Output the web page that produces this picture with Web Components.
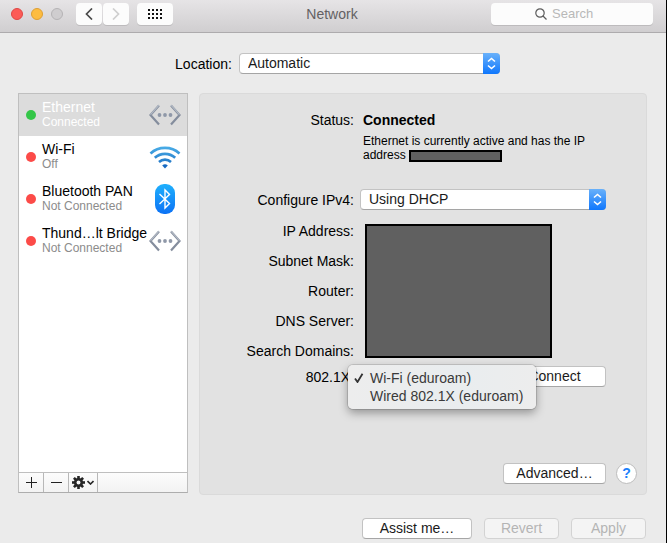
<!DOCTYPE html>
<html lang="en">
<head>
<meta charset="utf-8">
<title>Network</title>
<style>
  body {
    margin: 0;
    background: #ebebeb;
    color: #000;
    font: 14px/20px "Liberation Sans", Arial, sans-serif;
  }
</style>
</head>
<body>

<mac-window>
  <mac-toolbar slot="toolbar" heading="Network"></mac-toolbar>

  <mac-select class="location" label="Location:" options="Automatic"></mac-select>

  <service-list slot="sidebar">
    <service-item name="Ethernet" status="Connected" icon="ethernet" online selected></service-item>
    <service-item name="Wi-Fi" status="Off" icon="wifi"></service-item>
    <service-item name="Bluetooth PAN" status="Not Connected" icon="bluetooth"></service-item>
    <service-item name="Thund…lt Bridge" status="Not Connected" icon="ethernet"></service-item>
  </service-list>

  <network-panel slot="panel"></network-panel>

  <mac-button slot="actions" size="110">Assist me…</mac-button>
  <mac-button slot="actions" size="75" disabled>Revert</mac-button>
  <mac-button slot="actions" size="75" disabled>Apply</mac-button>
</mac-window>

<script>
const ICONS = {
  ethernet: `
    <svg width="32" height="22" viewBox="0 0 32 22" fill="none">
      <path d="M10 1.500 1.500 11l8.500 9.500M22 1.500l8.500 9.500-8.500 9.500" stroke="#848d9d" stroke-width="2.200"/>
      <path d="M10 1.200 1.500 10.700M22 1.200l8.500 9.500" stroke="#b3bac5" stroke-width="1.200"/>
      <g fill="#8f98a8"><circle cx="10.500" cy="11" r="1.900"/><circle cx="16" cy="11" r="1.900"/><circle cx="21.500" cy="11" r="1.900"/></g>
    </svg>`,
  wifi: `
    <svg width="32" height="24" viewBox="0 0 32 24" fill="none">
      <defs><linearGradient id="w" x1="0" y1="0" x2="0" y2="24" gradientUnits="userSpaceOnUse">
        <stop offset="0" stop-color="#4db2ea"/><stop offset="1" stop-color="#1566bd"/></linearGradient></defs>
      <g stroke="url(#w)" stroke-width="2.600">
        <path d="M1.500 8.500C9.500 1 22.500 1 30.500 8.500"/>
        <path d="M5.800 12.800C11.500 7.500 20.500 7.500 26.200 12.800"/>
        <path d="M10 17C13.500 13.800 18.500 13.800 22 17"/>
      </g>
      <path d="M13.200 20.500Q16 18 18.800 20.500L16 23.500Z" fill="#1669c2"/>
    </svg>`,
  bluetooth: `
    <svg width="32" height="32" viewBox="0 0 32 32" fill="none">
      <defs><linearGradient id="b" x1="0" y1="0" x2="0" y2="1">
        <stop offset="0" stop-color="#1fb0fd"/><stop offset="1" stop-color="#0c72f5"/></linearGradient></defs>
      <rect x="6" y="1" width="20" height="30" rx="9" fill="url(#b)"/>
      <path d="M10.500 11l10 9.500L16 25V7l4.500 4.500-10 9.500" stroke="#fff" stroke-width="1.400"/>
    </svg>`,
};

// attach an open shadow root and fill it
function render(el, html) {
  el.attachShadow({ mode: 'open' }).innerHTML = html;
}

class MacWindow extends HTMLElement {
  constructor() {
    super();
    render(this, `
      <style>
        :host {
          display: flex;
          flex-direction: column;
          box-sizing: border-box;
          min-height: 100vh;
          padding-bottom: 4px;
          border-right: 1px solid #000;
        }
        .location {
          display: flex;
          justify-content: center;
          padding: 20px 0 19px 9px;
        }
        ::slotted(.location) { --control-width: 261px; }
        main {
          flex: 1;
          display: grid;
          grid-template-columns: 170px 1fr;
          gap: 11px;
          padding: 0 19px 0 18px;
        }
        ::slotted(service-list) { margin-bottom: 2px; }
        footer {
          display: flex;
          justify-content: flex-end;
          gap: 12px;
          padding: 23px 20px 0;
        }
      </style>
      <slot name="toolbar"></slot>
      <div class="location"><slot></slot></div>
      <main>
        <slot name="sidebar"></slot>
        <slot name="panel"></slot>
      </main>
      <footer><slot name="actions"></slot></footer>
    `);
  }
}

class MacToolbar extends HTMLElement {
  constructor() {
    super();
    // 4 x 3 dots of the "show all" button
    let dots = '';
    for (let y = 0; y < 3; y++) {
      for (let x = 0; x < 4; x++) {
        dots += `<rect x="${x * 4}" y="${y * 4}" width="2" height="2"/>`;
      }
    }
    render(this, `
      <style>
        :host {
          display: grid;
          grid-template-columns: 1fr auto 1fr;
          align-items: center;
          height: 32px;
          padding: 0 13px 0 11px;
          background: linear-gradient(#e6e4e6, #d0ced0);
          border-bottom: 1px solid #adabad;
        }
        .left, .lights, .nav { display: flex; align-items: center; }
        .lights { gap: 8px; margin-right: 13px; }
        .nav { gap: 1px; margin-right: 8px; }
        .left, .search { margin-bottom: 4px; }
        button {
          display: grid;
          place-items: center;
          width: 26px;
          height: 22px;
          padding: 0;
          border: 0;
          border-radius: 4px;
          background: #fcfcfc;
          box-shadow: 0 1px 0 #bdbbbd;
        }
        .lights button {
          width: 12px;
          height: 12px;
          border-radius: 50%;
          box-shadow: none;
        }
        .lights .close { background: #fc5b57; border: 1px solid #df4744; }
        .lights .minimize { background: #fdbc40; border: 1px solid #de9f34; }
        .lights .zoom { background: #cfcdcf; border: 1px solid #b5b3b5; }
        .all { width: 36px; }
        h1 {
          margin: 0 0 4px;
          font-size: 14px;
          font-weight: normal;
          color: #636163;
        }
        .search {
          justify-self: end;
          display: flex;
          align-items: center;
          gap: 5px;
          box-sizing: border-box;
          width: 162px;
          height: 22px;
          padding-left: 44px;
          border-radius: 4px;
          background: #fcfcfc;
          box-shadow: 0 1px 0 #bdbbbd;
        }
        input {
          flex: 1;
          min-width: 0;
          padding: 0;
          border: 0;
          outline: 0;
          background: none;
          font: inherit;
          font-size: 13px;
        }
        input::placeholder { color: #b8b8b8; }
      </style>
      <div class="left">
        <div class="lights">
          <button class="close" aria-label="Close"></button>
          <button class="minimize" aria-label="Minimize"></button>
          <button class="zoom" aria-label="Zoom" disabled></button>
        </div>
        <div class="nav">
          <button aria-label="Back"><svg width="8" height="12" fill="none" stroke="#4a4a4a" stroke-width="1.700"><path d="M7 .5 1.500 6 7 11.500"/></svg></button>
          <button aria-label="Forward" disabled><svg width="8" height="12" fill="none" stroke="#cfcfcf" stroke-width="1.700"><path d="M1 .5 6.500 6 1 11.500"/></svg></button>
        </div>
        <button class="all" aria-label="Show All"><svg width="14" height="10" fill="#111">${dots}</svg></button>
      </div>
      <h1>${this.getAttribute('heading')}</h1>
      <label class="search">
        <svg width="12" height="12" fill="none" stroke="#5c5c5c" stroke-width="1.200"><circle cx="5" cy="5" r="4.200"/><path d="M8 8l3.500 3.500"/></svg>
        <input type="text" placeholder="Search" aria-label="Search">
      </label>
    `);
  }
}

class MacSelect extends HTMLElement {
  constructor() {
    super();
    const options = this.getAttribute('options').split('|');
    render(this, `
      <style>
        :host {
          display: grid;
          grid-template-columns: var(--label-width, auto) var(--control-width, 1fr);
          align-items: center;
          gap: var(--label-gap, 7px);
        }
        label { text-align: right; }
        .control { position: relative; display: flex; }
        select {
          appearance: none;
          width: 100%;
          height: 21px;
          padding: 0 24px 0 8px;
          border: 1px solid #c3c3c3;
          border-bottom-color: #a5a5a5;
          border-radius: 4px;
          background: #fff;
          color: #1a1a1a;
          font: inherit;
          line-height: 19px;
        }
        svg {
          position: absolute;
          right: 0;
          top: 0;
          border-radius: 0 4px 4px 0;
          background: linear-gradient(#69b1fa, #0f77fd);
          pointer-events: none;
        }
      </style>
      <label for="s">${this.getAttribute('label')}</label>
      <div class="control">
        <select id="s">${options.map(o => `<option>${o}</option>`).join('')}</select>
        <svg width="17" height="21" fill="none" stroke="#fff" stroke-width="1.600"><path d="M5 8.500 8.500 5.500 12 8.500M5 12.500l3.500 3 3.500-3"/></svg>
      </div>
    `);
  }
}

class MacButton extends HTMLElement {
  constructor() {
    super();
    const disabled = this.hasAttribute('disabled') ? 'disabled' : '';
    render(this, `
      <style>
        :host { display: block; }
        button {
          display: block;
          width: ${this.getAttribute('size')}px;
          height: 21px;
          padding: 0;
          border: 1px solid #c2c2c2;
          border-bottom-color: #a6a6a6;
          border-radius: 4px;
          background: #fff;
          color: #1a1a1a;
          font: inherit;
          line-height: 19px;
        }
        button:disabled {
          background: #f4f4f4;
          border-color: #d3d3d3;
          color: #b4b4b4;
        }
      </style>
      <button ${disabled}><slot></slot></button>
    `);
  }
}

class ServiceItem extends HTMLElement {
  constructor() {
    super();
    render(this, `
      <style>
        :host {
          display: grid;
          grid-template-columns: 10px 1fr 32px;
          align-items: center;
          column-gap: 6px;
          height: 42px;
          padding: 0 6px 0 7px;
        }
        :host([selected]) { background: #dcdcdc; color: #fff; }
        .dot {
          width: 10px;
          height: 10px;
          border-radius: 50%;
          background: #fc4b48;
        }
        :host([online]) .dot { background: #34c648; }
        .text { min-width: 0; white-space: nowrap; line-height: 15px; }
        .status { font-size: 12px; color: #8c8c8c; }
        :host([selected]) .status { color: #fff; }
        .icon { display: grid; place-items: center; }
      </style>
      <span class="dot"></span>
      <div class="text">
        <div>${this.getAttribute('name')}</div>
        <div class="status">${this.getAttribute('status')}</div>
      </div>
      <span class="icon">${ICONS[this.getAttribute('icon')]}</span>
    `);
  }
}

class ServiceList extends HTMLElement {
  constructor() {
    super();
    let teeth = '';
    for (let a = 0; a < 360; a += 45) {
      teeth += `<rect x="5.200" y="0" width="2.600" height="4" transform="rotate(${a} 6.500 6.500)"/>`;
    }
    render(this, `
      <style>
        :host {
          display: flex;
          flex-direction: column;
          border: 1px solid #bfbfbf;
          border-bottom-color: #adadad;
          background: #fff;
        }
        .items { flex: 1; }
        .bar {
          display: flex;
          height: 19px;
          border-top: 1px solid #bfbfbf;
          background: linear-gradient(#fcfcfc, #f3f3f3);
        }
        button {
          display: flex;
          align-items: center;
          justify-content: center;
          gap: 2px;
          box-sizing: border-box;
          width: 25px;
          padding: 0;
          border: 0;
          border-right: 1px solid #b8b8b8;
          background: none;
        }
        .more { width: 29px; }
      </style>
      <div class="items"><slot></slot></div>
      <div class="bar">
        <button aria-label="Add"><svg width="11" height="11" stroke="#222"><path d="M0 5.500h11M5.500 0v11"/></svg></button>
        <button aria-label="Remove"><svg width="11" height="11" stroke="#222"><path d="M0 5.500h11"/></svg></button>
        <button class="more" aria-label="More">
          <svg width="13" height="13" fill="#262626">${teeth}<circle cx="6.500" cy="6.500" r="3.300" fill="none" stroke="#262626" stroke-width="2.600"/></svg>
          <svg width="7" height="5" fill="none" stroke="#262626" stroke-width="1.600"><path d="M.5 1l3 3 3-3"/></svg>
        </button>
      </div>
    `);
  }
}

class PopupMenu extends HTMLElement {
  constructor() {
    super();
    const items = this.getAttribute('items').split('|');
    render(this, `
      <style>
        :host {
          display: block;
          padding: 4px 0;
          border-radius: 5px;
          background: linear-gradient(to right, #ededed, #e9edef 60%, #ededed);
          box-shadow: 0 0 0 1px rgba(0, 0, 0, .12), 0 4px 10px rgba(0, 0, 0, .35);
          line-height: 18px;
        }
        button {
          display: grid;
          grid-template-columns: 10px auto;
          justify-content: start;
          align-items: center;
          column-gap: 6px;
          width: 100%;
          height: 18px;
          padding: 0 0 0 6px;
          border: 0;
          background: none;
          color: #3a3a3a;
          font: inherit;
          text-align: left;
          white-space: nowrap;
        }
      </style>
      <div role="menu">
        ${items.map((item, i) => `
          <button role="menuitemradio" aria-checked="${i === 0}">
            <svg width="10" height="10" fill="none" stroke="#333" stroke-width="1.800">${i === 0 ? '<path d="M1 5.500 3.500 9 8.500 .8"/>' : ''}</svg>
            <span>${item}</span>
          </button>`).join('')}
      </div>
    `);
  }
}

class NetworkPanel extends HTMLElement {
  constructor() {
    super();
    const fields = ['IP Address:', 'Subnet Mask:', 'Router:', 'DNS Server:', 'Search Domains:'];
    render(this, `
      <style>
        :host {
          --label-width: 154px;
          --label-gap: 6px;
          display: flex;
          flex-direction: column;
          padding: 16px 9px 10px 0;
          border: 1px solid #dadada;
          border-radius: 4px;
          background: #e2e2e2;
        }
        .row {
          display: grid;
          grid-template-columns: var(--label-width) 1fr;
          column-gap: 9px;
        }
        .label { text-align: right; }
        .form { padding-right: 31px; }
        p {
          max-width: 240px;
          margin: 4px 0 27px;
          font-size: 12px;
          line-height: 14px;
        }
        .redacted {
          box-sizing: border-box;
          border: 2px solid #000;
          background: #606060;
        }
        p .redacted {
          display: inline-block;
          width: 93px;
          height: 12px;
          vertical-align: middle;
        }
        .fields { margin-top: 6px; line-height: 30px; }
        .fields .redacted { width: 187px; margin: 8px 2px; }
        .auth { position: relative; line-height: 22px; }
        .auth mac-button { justify-self: end; }
        popup-menu {
          position: absolute;
          left: 148px;
          top: -1px;
          width: 188px;
        }
        .bottom {
          display: flex;
          justify-content: flex-end;
          gap: 10px;
          margin-top: auto;
        }
        .help {
          width: 21px;
          height: 21px;
          padding: 0;
          border: 1px solid #bdbdbd;
          border-radius: 50%;
          background: #fff;
          color: #1a80fb;
          font: bold 14px/19px "Liberation Sans", Arial, sans-serif;
        }
      </style>
      <div class="form">
        <div class="row">
          <span class="label">Status:</span>
          <div>
            <strong>Connected</strong>
            <p>Ethernet is currently active and has the IP address <span class="redacted"></span></p>
          </div>
        </div>
        <mac-select label="Configure IPv4:" options="Using DHCP"></mac-select>
        <div class="row fields">
          <div class="label">${fields.map(f => `<div>${f}</div>`).join('')}</div>
          <div class="redacted"></div>
        </div>
        <div class="row auth">
          <span class="label">802.1X:</span>
          <mac-button size="103">Connect</mac-button>
          <popup-menu items="Wi-Fi (eduroam)|Wired 802.1X (eduroam)"></popup-menu>
        </div>
      </div>
      <div class="bottom">
        <mac-button size="103">Advanced…</mac-button>
        <button class="help" aria-label="Help">?</button>
      </div>
    `);
  }
}

customElements.define('mac-window', MacWindow);
customElements.define('mac-toolbar', MacToolbar);
customElements.define('mac-select', MacSelect);
customElements.define('mac-button', MacButton);
customElements.define('service-item', ServiceItem);
customElements.define('service-list', ServiceList);
customElements.define('popup-menu', PopupMenu);
customElements.define('network-panel', NetworkPanel);
</script>
</body>
</html>
